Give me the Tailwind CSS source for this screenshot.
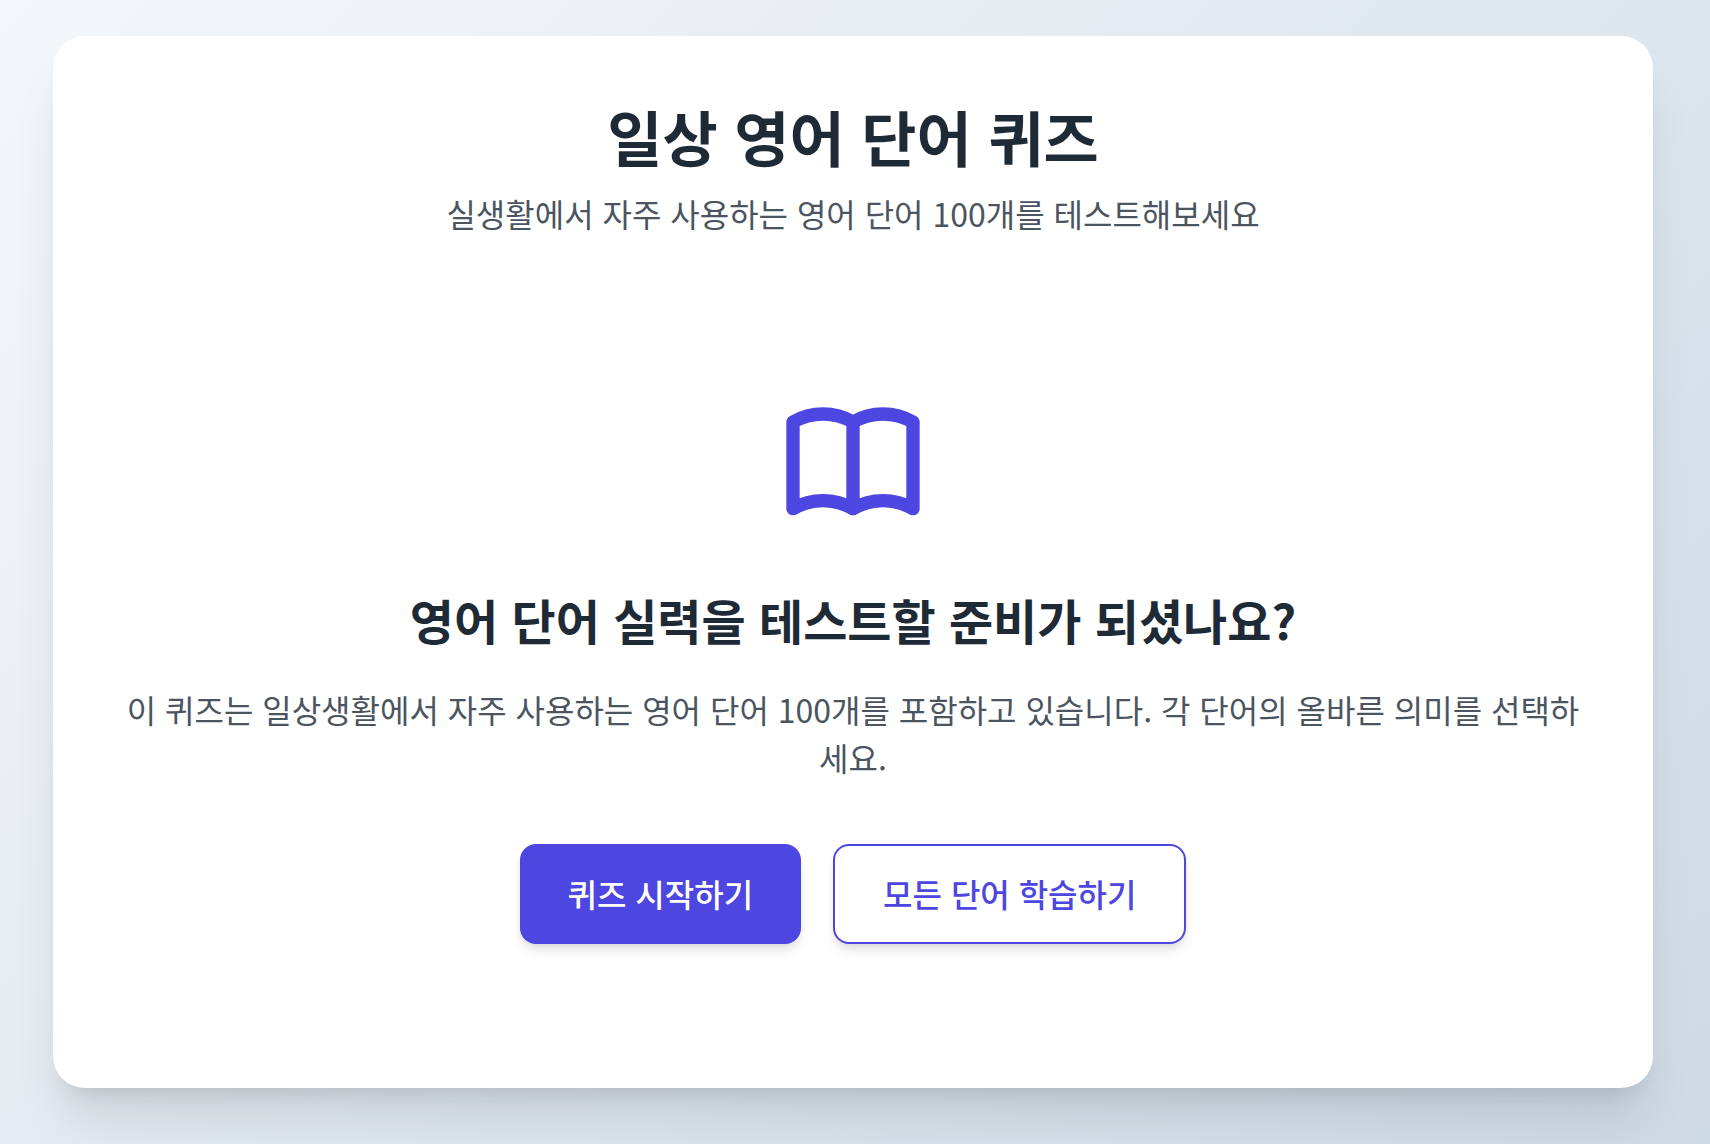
<!DOCTYPE html>
<html lang="ko">
<head>
    <meta charset="UTF-8">
    <meta name="viewport" content="width=device-width, initial-scale=1.0">
    <title>일상 영어 단어 퀴즈</title>
    <script src="https://cdn.jsdelivr.net/npm/@tailwindcss/browser@4"></script>
</head>
<body class="min-h-screen bg-linear-135 from-[#f3f7f9] to-[#ced9e6] pt-9 pb-14 pl-[53px] pr-[57px] font-['Liberation_Sans','Noto_Sans_CJK_KR',sans-serif] text-[32px] leading-[48px] text-[#4a555f]">
    <main class="rounded-[32px] bg-white p-16 text-center shadow-[0_40px_50px_-10px_rgba(0,0,0,0.1),0_16px_20px_-12px_rgba(0,0,0,0.1)]">
        <header>
            <h1 class="text-[60px] leading-[84px] font-bold text-[#1e2a36]">일상 영어 단어 퀴즈</h1>
            <p class="mt-2">실생활에서 자주 사용하는 영어 단어 <span class="font-['Noto_Sans_CJK_KR'] leading-none">100</span>개를 테스트해보세요</p>
        </header>

        <!-- 시작 화면 -->
        <section class="flex flex-col items-center pt-[142px] pb-20">
            <svg xmlns="http://www.w3.org/2000/svg" fill="none" stroke="currentColor" stroke-linecap="round" stroke-linejoin="round" stroke-width="2" class="size-40 text-[#4d46e1]" viewBox="0 0 24 24">
                <path d="M3 19a9 9 0 0 1 9 0a9 9 0 0 1 9 0M3 6a9 9 0 0 1 9 0a9 9 0 0 1 9 0M3 6v13M12 6v13M21 6v13"></path>
            </svg>
            <h2 class="mt-[50px] text-[48px] leading-[64px] font-bold text-[#1e2a36]">영어 단어 실력을 테스트할 준비가 되셨나요<span class="font-['Noto_Sans_CJK_KR'] leading-none">?</span></h2>
            <p class="mt-8">이 퀴즈는 일상생활에서 자주 사용하는 영어 단어 <span class="font-['Noto_Sans_CJK_KR'] leading-none">100</span>개를 포함하고 있습니다<span class="font-['Noto_Sans_CJK_KR'] leading-none">.</span> 각 단어의 올바른 의미를 선택하세요<span class="font-['Noto_Sans_CJK_KR'] leading-none">.</span></p>
            <div class="mt-15 flex flex-wrap justify-center gap-8">
                <button type="button" class="rounded-2xl bg-[#4d46e1] px-12 pt-[26px] pb-[22px] font-medium text-white shadow-[0_8px_12px_-2px_rgba(0,0,0,0.1),0_4px_8px_-4px_rgba(0,0,0,0.1)]">퀴즈 시작하기</button>
                <button type="button" class="rounded-2xl border-2 border-[#4d46e1] bg-white px-12 pt-[26px] pb-[22px] font-medium text-[#4d46e1] shadow-[0_8px_12px_-2px_rgba(0,0,0,0.1),0_4px_8px_-4px_rgba(0,0,0,0.1)]">모든 단어 학습하기</button>
            </div>
        </section>
    </main>
</body>
</html>
